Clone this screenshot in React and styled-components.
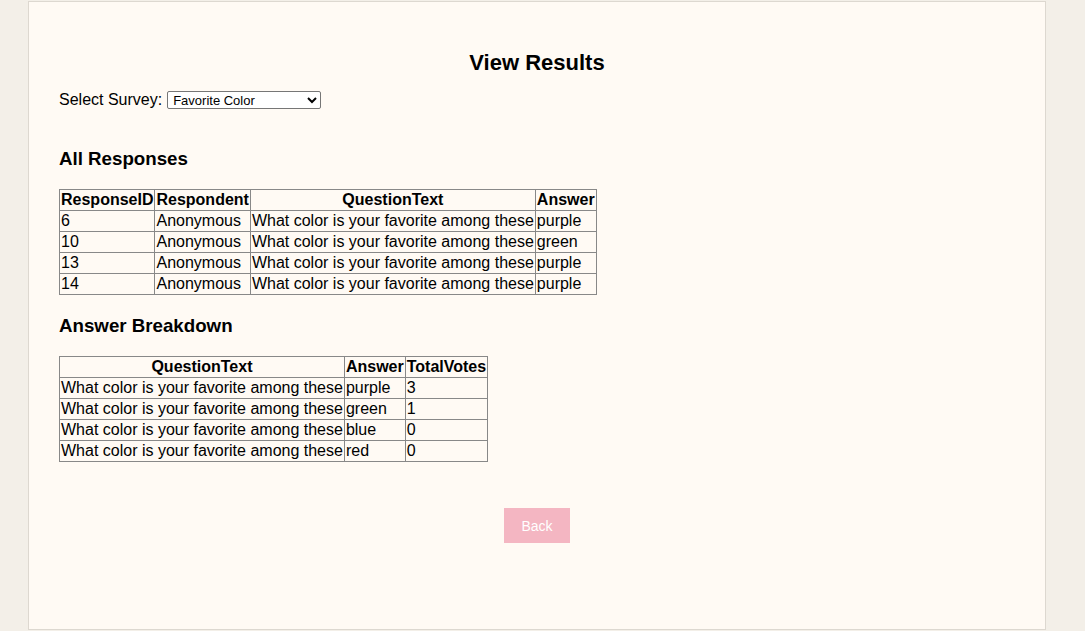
import React, { useState } from "react";
import styled, { createGlobalStyle } from "styled-components";

const GlobalStyle = createGlobalStyle`
  html, body {
    margin: 0;
    padding: 0;
    background: #f3efe8;
    font-family: "Liberation Sans", Arial, sans-serif;
    color: #000;
  }
`;

const Page = styled.div`
  padding: 1px 39px 0 28px;
`;

const Card = styled.div`
  background: #fffaf4;
  border: 1px solid #ddd8d0;
  padding: 48px 30px 86px;
`;

const Title = styled.h2`
  margin: 0;
  font-size: 22px;
  line-height: 26px;
  font-weight: bold;
  text-align: center;
`;

const SelectRow = styled.div`
  margin-top: 14px;
  display: flex;
  align-items: center;
  gap: 5px;
  font-size: 16px;
  line-height: 20px;
`;

const SurveySelect = styled.select`
  width: 154px;
  height: 18px;
  font-family: "Liberation Sans", Arial, sans-serif;
  font-size: 13px;
  padding: 0 1px;
  border: 1px solid #767676;
  border-radius: 2px;
  background: #fff;
  color: #000;
`;

const SectionTitle = styled.h3`
  margin: ${(p) => (p.$first ? "38px" : "20px")} 0 19px;
  font-size: 18.72px;
  line-height: 22px;
  font-weight: bold;
`;

const Table = styled.table`
  border-collapse: collapse;
  font-size: 16px;
  line-height: 18px;

  th,
  td {
    border: 1px solid #888;
    padding: 1px;
    white-space: nowrap;
  }

  th {
    font-weight: bold;
    text-align: center;
  }

  td {
    text-align: left;
  }
`;

const ButtonRow = styled.div`
  margin-top: 46px;
  display: flex;
  justify-content: center;
`;

const BackButton = styled.button`
  width: 66px;
  height: 35px;
  border: none;
  background: #f4b6c2;
  color: #fff;
  font-family: "Liberation Sans", Arial, sans-serif;
  font-size: 14px;
  cursor: pointer;
`;

const question = "What color is your favorite among these";

const responses = [
  { id: 6, who: "Anonymous", answer: "purple" },
  { id: 10, who: "Anonymous", answer: "green" },
  { id: 13, who: "Anonymous", answer: "purple" },
  { id: 14, who: "Anonymous", answer: "purple" },
];

const breakdown = [
  { answer: "purple", votes: 3 },
  { answer: "green", votes: 1 },
  { answer: "blue", votes: 0 },
  { answer: "red", votes: 0 },
];

export default function App() {
  const [survey, setSurvey] = useState("color");

  return (
    <Page>
      <GlobalStyle />
      <Card>
        <Title>View Results</Title>
        <SelectRow>
          <label htmlFor="survey">Select Survey:</label>
          <SurveySelect
            id="survey"
            value={survey}
            onChange={(e) => setSurvey(e.target.value)}
          >
            <option value="color">Favorite Color</option>
          </SurveySelect>
        </SelectRow>

        <SectionTitle $first>All Responses</SectionTitle>
        <Table>
          <thead>
            <tr>
              <th>ResponseID</th>
              <th>Respondent</th>
              <th>QuestionText</th>
              <th>Answer</th>
            </tr>
          </thead>
          <tbody>
            {responses.map((r) => (
              <tr key={r.id}>
                <td>{r.id}</td>
                <td>{r.who}</td>
                <td>{question}</td>
                <td>{r.answer}</td>
              </tr>
            ))}
          </tbody>
        </Table>

        <SectionTitle>Answer Breakdown</SectionTitle>
        <Table>
          <thead>
            <tr>
              <th>QuestionText</th>
              <th>Answer</th>
              <th>TotalVotes</th>
            </tr>
          </thead>
          <tbody>
            {breakdown.map((b) => (
              <tr key={b.answer}>
                <td>{question}</td>
                <td>{b.answer}</td>
                <td>{b.votes}</td>
              </tr>
            ))}
          </tbody>
        </Table>

        <ButtonRow>
          <BackButton>Back</BackButton>
        </ButtonRow>
      </Card>
    </Page>
  );
}
